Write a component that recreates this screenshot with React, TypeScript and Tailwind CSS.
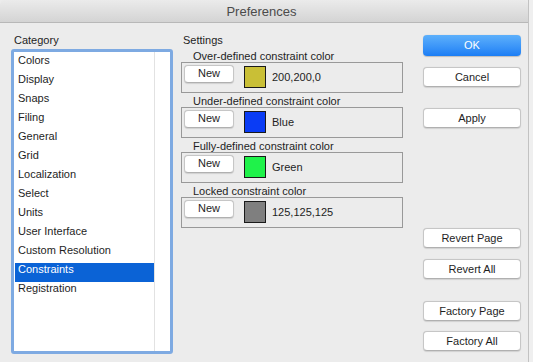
import React from "react";

const categories = [
  "Colors",
  "Display",
  "Snaps",
  "Filing",
  "General",
  "Grid",
  "Localization",
  "Select",
  "Units",
  "User Interface",
  "Custom Resolution",
  "Constraints",
  "Registration",
];

const groups = [
  { label: "Over-defined constraint color", color: "bg-[#c9bf36]", value: "200,200,0" },
  { label: "Under-defined constraint color", color: "bg-[#0a3cf5]", value: "Blue" },
  { label: "Fully-defined constraint color", color: "bg-[#1ff24a]", value: "Green" },
  { label: "Locked constraint color", color: "bg-[#7f7f7f]", value: "125,125,125" },
];

function MacButton({ children, className = "" }: { children: React.ReactNode; className?: string }) {
  return (
    <div
      className={
        "flex items-center justify-center rounded-[4px] border border-[#c6c6c6] border-b-[#b0b0b0] bg-white text-[11px] text-[#1e1e1e] shadow-[0_0.5px_1px_rgba(0,0,0,0.12)] " +
        className
      }
    >
      {children}
    </div>
  );
}

export default function App() {
  return (
    <div
      className="flex h-[362px] w-[533px] overflow-hidden bg-[#efefef]"
      style={{ fontFamily: '"Liberation Sans", Arial, sans-serif' }}
    >
      <div className="flex h-full w-[529px] flex-col border-r border-[#c2c2c2] bg-[#ececec]">
        {/* Title bar */}
        <div className="flex h-[23px] shrink-0 items-center justify-center rounded-t-[5px] border-b border-[#b8b8b8] bg-gradient-to-b from-[#ebebeb] to-[#d4d4d4] pr-[5px]">
          <span className="pt-[1px] text-[13px] leading-[22px] text-[#4b4b4b]">Preferences</span>
        </div>

        {/* Body */}
        <div className="flex flex-1 pt-[10px] pl-[11px] text-[11px] text-[#1e1e1e]">
          {/* Category column */}
          <div className="flex w-[162px] flex-col">
            <div className="pl-[3px] leading-[14px]">Category</div>
            <div className="mt-[2px] flex h-[305px] rounded-[3px] border-[3px] border-[#7eaae2] bg-white">
              <div className="flex w-[140px] flex-col pl-[1px] pt-[2px]">
                {categories.map((c) => (
                  <div
                    key={c}
                    className={
                      "h-[19px] shrink-0 pl-[3px] leading-[13px] " +
                      (c === "Constraints" ? "bg-[#0b63d6] text-white" : "")
                    }
                  >
                    {c}
                  </div>
                ))}
              </div>
              <div className="flex-1 border-l border-[#e2e2e2]" />
            </div>
          </div>

          {/* Settings column */}
          <div className="ml-[8px] flex w-[222px] flex-col">
            <div className="pl-[2px] leading-[14px]">Settings</div>
            {groups.map((g, i) => (
              <div key={g.label} className={"flex flex-col " + (i === 0 ? "mt-[3px]" : "mt-[2px]")}>
                <div className="pl-[12px] leading-[12px]">{g.label}</div>
                <div className="flex h-[31px] items-start border border-[#999999] pl-[2px] pt-[2px]">
                  <MacButton className="h-[18px] w-[50px] pb-[2px]">New</MacButton>
                  <div className="ml-[10px] mt-[1px] flex items-center">
                    <div className={"h-[22px] w-[22px] border border-[#1a1a1a] " + g.color} />
                    <span className="ml-[6px] text-[11px]">{g.value}</span>
                  </div>
                </div>
              </div>
            ))}
          </div>

          {/* Buttons column */}
          <div className="ml-[20px] flex w-[98px] flex-col pt-[2px]">
            <div className="flex h-[21px] items-center justify-center rounded-[4px] bg-gradient-to-b from-[#5db0fb] to-[#1b7ef5] text-[11px] text-white shadow-[0_0.5px_1px_rgba(0,0,0,0.2)]">
              OK
            </div>
            <MacButton className="mt-[11px] h-[20px]">Cancel</MacButton>
            <MacButton className="mt-[21px] h-[20px]">Apply</MacButton>
            <MacButton className="mt-[100px] h-[20px]">Revert Page</MacButton>
            <MacButton className="mt-[11px] h-[20px]">Revert All</MacButton>
            <MacButton className="mt-[22px] h-[20px]">Factory Page</MacButton>
            <MacButton className="mt-[10px] h-[20px]">Factory All</MacButton>
          </div>
        </div>
      </div>
    </div>
  );
}
